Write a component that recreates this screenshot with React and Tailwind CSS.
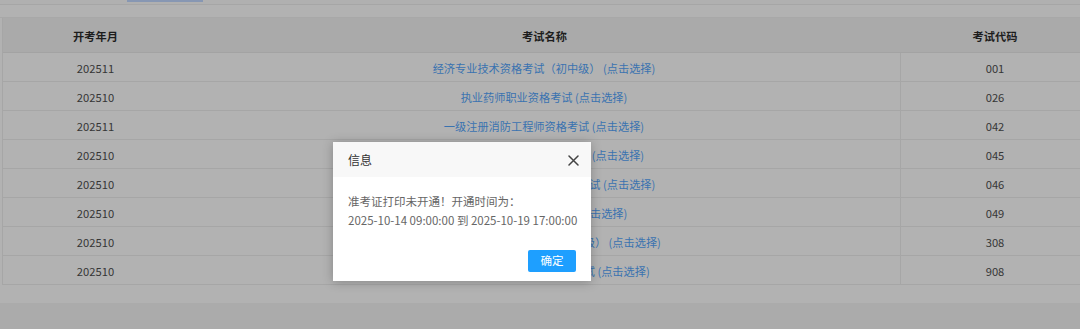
import React from "react";

const rows = [
  ["202511", "经济专业技术资格考试（初中级） (点击选择)", "001"],
  ["202510", "执业药师职业资格考试 (点击选择)", "026"],
  ["202511", "一级注册消防工程师资格考试 (点击选择)", "042"],
  ["202510", "一级注册建造师执业资格考试 (点击选择)", "045"],
  ["202510", "全国一级造价工程师职业资格考试 (点击选择)", "046"],
  ["202510", "房地产估价师资格考试 (点击选择)", "049"],
  ["202510", "审计专业技术资格考试（初、中级） (点击选择)", "308"],
  ["202510", "出版专业技术人员职业资格考试 (点击选择)", "908"],
];

export default function App() {
  return (
    <div
      className="relative w-[1080px] h-[329px] overflow-hidden bg-[#ababab]"
      style={{ fontFamily: '"Noto Sans CJK SC", "Noto Sans", sans-serif' }}
    >
      <div className="h-[303px] bg-[#b2b2b2] flex flex-col">
        <div className="h-[5px] bg-[#b0b0b0] border-b border-[#a6a6a6]">
          <div className="ml-[127px] w-[76px] h-[2px] bg-[#8797b3]" />
        </div>
        <div className="h-[13px] border-b border-[#a8a8a8]" />
        <div className="ml-[2px] w-[1086px] border-l border-[#a6a6a6] flex flex-col">
          <div className="grid grid-cols-[185px_713px_188px] h-[35px] bg-[#aaaaaa] border-b border-[#a3a3a3] items-center pt-[3px] text-[11.2px] font-bold text-[#1d1d1d]">
            <div className="text-center">开考年月</div>
            <div className="text-center">考试名称</div>
            <div className="text-center">考试代码</div>
          </div>
          {rows.map((r, i) => (
            <div
              key={i}
              className="grid grid-cols-[185px_713px_188px] h-[29px] border-b border-[#a6a6a6] items-stretch text-[11.2px]"
            >
              <div className="text-center text-[#363636] flex items-center justify-center pt-[3px]">{r[0]}</div>
              <div className="text-[#3a73b0] flex items-center justify-center pt-[3px] border-r border-[#a6a6a6]">
                {r[1]}
              </div>
              <div className="text-center text-[#363636] flex items-center justify-center pt-[3px]">{r[2]}</div>
            </div>
          ))}
        </div>
      </div>

      <div className="absolute left-[333px] top-[142px] w-[258px] h-[139px] bg-white shadow-[0_1px_10px_rgba(0,0,0,0.25)] flex flex-col">
        <div className="h-[35px] bg-[#f8f8f8] flex items-center justify-between pl-[15px] pr-[12px]">
          <span className="text-[12px] text-[#333333]">信息</span>
          <svg width="11" height="11" viewBox="0 0 11 11" className="mt-[1px]">
            <path d="M1 1 L10 10 M10 1 L1 10" stroke="#444" strokeWidth="1.5" strokeLinecap="round" />
          </svg>
        </div>
        <div className="pl-[15px] pt-[15px] text-[11.5px] leading-[19px] text-[#666666]">
          <div>准考证打印未开通！开通时间为：</div>
          <div>2025-10-14 09:00:00 到 2025-10-19 17:00:00</div>
        </div>
        <div className="flex justify-end pr-[15px] mt-auto mb-[9px]">
          <div className="w-[48px] h-[22px] rounded-[2px] bg-[#1e9fff] text-white text-[11.5px] flex items-center justify-center">
            确定
          </div>
        </div>
      </div>
    </div>
  );
}
